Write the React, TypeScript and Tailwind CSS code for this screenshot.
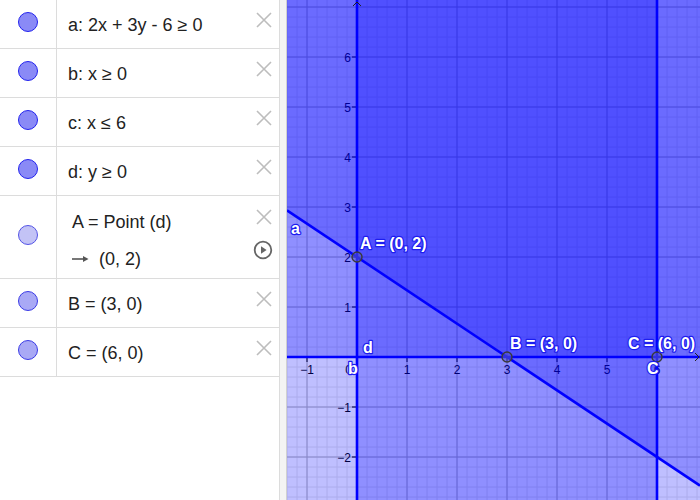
import React from "react";

const W = 413;
const H = 500;
const OX = 70;
const OY = 357;
const S = 50;

const gx = (u: number) => OX + S * u;
const gy = (v: number) => OY - S * v;

const CloseIcon = () => (
  <svg width="16" height="16" viewBox="0 0 16 16">
    <path d="M1 1 L15 15 M15 1 L1 15" stroke="#bdbdbd" strokeWidth="1.6" fill="none" />
  </svg>
);

const PlayIcon = () => (
  <svg width="20" height="20" viewBox="0 0 20 20">
    <circle cx="10" cy="10" r="8.3" stroke="#666" strokeWidth="1.8" fill="none" />
    <path d="M8 6.2 L13.6 10 L8 13.8 Z" fill="#666" />
  </svg>
);

const ArrowIcon = () => (
  <svg width="17" height="8" viewBox="0 0 17 8">
    <path d="M0 4 L14 4" stroke="#555" strokeWidth="1.6" />
    <path d="M11 1 L16.5 4 L11 7 Z" fill="#555" />
  </svg>
);

const Marble = ({ fill, border }: { fill: string; border: string }) => (
  <div
    className="h-[20px] w-[20px] rounded-full border"
    style={{ backgroundColor: fill, borderColor: border }}
  />
);

type Row = {
  text: React.ReactNode;
  fill: string;
  border: string;
};

const rows: Row[] = [
  { text: "a: 2x + 3y - 6 ≥ 0", fill: "#8a8af6", border: "#2323ee" },
  { text: "b: x ≥ 0", fill: "#8a8af6", border: "#2323ee" },
  { text: "c: x ≤ 6", fill: "#8a8af6", border: "#2323ee" },
  { text: "d: y ≥ 0", fill: "#8a8af6", border: "#2323ee" },
];

const points: Row[] = [
  { text: "B = (3, 0)", fill: "#a9a9f5", border: "#3b3be6" },
  { text: "C = (6, 0)", fill: "#a9a9f5", border: "#3b3be6" },
];

const AlgebraRow = ({ row }: { row: Row }) => (
  <div className="flex h-[49px] border-b border-[#dcdcdc]">
    <div className="flex w-[57px] shrink-0 items-start justify-center border-r border-[#dcdcdc] pt-[12px]">
      <Marble fill={row.fill} border={row.border} />
    </div>
    <div className="relative flex flex-1 items-center whitespace-pre pl-[11px] pt-[2px] text-[18px] text-[#222]">
      {row.text}
      <div className="absolute right-[7px] top-[12px]">
        <CloseIcon />
      </div>
    </div>
  </div>
);

const Label = ({ x, y, children }: { x: number; y: number; children: React.ReactNode }) => (
  <text
    x={x}
    y={y}
    fontSize="16"
    fontWeight="bold"
    fontFamily="'Liberation Sans', Arial, sans-serif"
    fill="#ffffff"
    stroke="#1d1df0"
    strokeWidth="2.4"
    paintOrder="stroke"
    strokeLinejoin="round"
  >
    {children}
  </text>
);

const Graphics = () => {
  const minorX: number[] = [];
  for (let x = 0; x <= W; x += 10) minorX.push(x);
  const minorY: number[] = [];
  for (let y = 7; y <= H; y += 10) minorY.push(y);
  const majorX: number[] = [];
  for (let x = 20; x <= W; x += 50) majorX.push(x);
  const majorY: number[] = [];
  for (let y = 7; y <= H; y += 50) majorY.push(y);

  const aLeft = gy(2 - (2 / 3) * ((0 - OX) / S));
  const aRight = gy(2 - (2 / 3) * ((W - OX) / S));
  const fill = "rgba(0,0,255,0.25)";
  const font = "'Liberation Sans', Arial, sans-serif";

  return (
    <svg width={W} height={H} viewBox={`0 0 ${W} ${H}`} className="block">
      <rect x="0" y="0" width={W} height={H} fill="#ffffff" />
      {minorX.map((x) => (
        <line key={"mx" + x} x1={x} y1={0} x2={x} y2={H} stroke="#e6e6e6" strokeWidth="1" />
      ))}
      {minorY.map((y) => (
        <line key={"my" + y} x1={0} y1={y} x2={W} y2={y} stroke="#e6e6e6" strokeWidth="1" />
      ))}
      {majorX.map((x) => (
        <line key={"Mx" + x} x1={x} y1={0} x2={x} y2={H} stroke="#b4b4b4" strokeWidth="1" />
      ))}
      {majorY.map((y) => (
        <line key={"My" + y} x1={0} y1={y} x2={W} y2={y} stroke="#b4b4b4" strokeWidth="1" />
      ))}

      {[-2, -1, 1, 2, 3, 4, 5, 6].map((v) => (
        <g key={"yl" + v}>
          <line x1={OX - 5} y1={gy(v)} x2={OX} y2={gy(v)} stroke="#000" strokeWidth="1" />
          <text x={OX - 6} y={gy(v) + 4.5} fontSize="12" fontFamily={font} textAnchor="end" fill="#000">
            {v < 0 ? "\u2212" + Math.abs(v) : v}
          </text>
        </g>
      ))}
      {[-1, 1, 2, 3, 4, 5, 6].map((u) => (
        <g key={"xl" + u}>
          <line x1={gx(u)} y1={OY} x2={gx(u)} y2={OY + 5} stroke="#000" strokeWidth="1" />
          <text x={gx(u)} y={OY + 17} fontSize="12" fontFamily={font} textAnchor="middle" fill="#000">
            {u < 0 ? "\u2212" + Math.abs(u) : u}
          </text>
        </g>
      ))}
      <text x={OX - 5} y={OY + 17} fontSize="12" fontFamily={font} textAnchor="end" fill="#000">
        0
      </text>

      <polygon points={`0,0 ${W},0 ${W},${aRight} 0,${aLeft}`} fill={fill} />
      <rect x={OX} y={0} width={W - OX} height={H} fill={fill} />
      <rect x={0} y={0} width={gx(6)} height={H} fill={fill} />
      <rect x={0} y={0} width={W} height={OY} fill={fill} />

      <line x1={0} y1={aLeft} x2={W} y2={aRight} stroke="#0000ff" strokeWidth="2.6" />
      <line x1={gx(0)} y1={0} x2={gx(0)} y2={H} stroke="#0000ff" strokeWidth="2.6" />
      <line x1={gx(6)} y1={0} x2={gx(6)} y2={H} stroke="#0000ff" strokeWidth="2.6" />
      <line x1={0} y1={OY} x2={W} y2={OY} stroke="#0000ff" strokeWidth="2.6" />

      <path d={`M${OX - 4} 6 L${OX} 2 L${OX + 4} 6`} stroke="#222" strokeWidth="1" fill="none" />
      <path d={`M${W - 5} ${OY - 4} L${W - 1} ${OY} L${W - 5} ${OY + 4}`} stroke="#222" strokeWidth="1" fill="none" />

      {[
        [0, 2],
        [3, 0],
        [6, 0],
      ].map(([u, v]) => (
        <circle
          key={"p" + u}
          cx={gx(u)}
          cy={gy(v)}
          r="5"
          fill="rgba(90,90,200,0.55)"
          stroke="#3a3a3a"
          strokeWidth="1.4"
        />
      ))}

      <Label x={4} y={234}>a</Label>
      <Label x={gx(0) - 9} y={OY + 17}>b</Label>
      <Label x={gx(0) + 6} y={OY - 4}>d</Label>
      <Label x={gx(0) + 3} y={249}>A = (0, 2)</Label>
      <Label x={gx(3) + 3} y={349}>B = (3, 0)</Label>
      <Label x={gx(6) - 29} y={349}>C = (6, 0)</Label>
      <Label x={gx(6) - 10} y={OY + 17}>C</Label>
    </svg>
  );
};

export default function App() {
  return (
    <div
      className="flex h-[500px] w-[700px] overflow-hidden bg-white"
      style={{ fontFamily: "'Liberation Sans', Arial, sans-serif" }}
    >
      <div className="w-[280px] shrink-0 border-r border-[#dcdcdc] bg-white">
        {rows.map((r, i) => (
          <AlgebraRow key={i} row={r} />
        ))}
        <div className="flex h-[83px] border-b border-[#dcdcdc]">
          <div className="flex w-[57px] shrink-0 items-start justify-center border-r border-[#dcdcdc] pt-[29px]">
            <Marble fill="#c3c3f6" border="#5454e6" />
          </div>
          <div className="relative flex flex-1 flex-col pl-[15px] pt-[15px] text-[18px] text-[#222]">
            <div className="h-[22px] leading-[22px]">A = Point (d)</div>
            <div className="mt-[15px] flex h-[22px] items-center leading-[22px]">
              <span className="flex w-[27px] items-center">
                <ArrowIcon />
              </span>
              <span>(0, 2)</span>
            </div>
            <div className="absolute right-[7px] top-[13px]">
              <CloseIcon />
            </div>
            <div className="absolute right-[6px] top-[44px]">
              <PlayIcon />
            </div>
          </div>
        </div>
        {points.map((r, i) => (
          <AlgebraRow key={i} row={r} />
        ))}
      </div>
      <div className="w-[7px] shrink-0 border-r border-[#d0d0d0] bg-[#f3f3f3]" />
      <Graphics />
    </div>
  );
}
